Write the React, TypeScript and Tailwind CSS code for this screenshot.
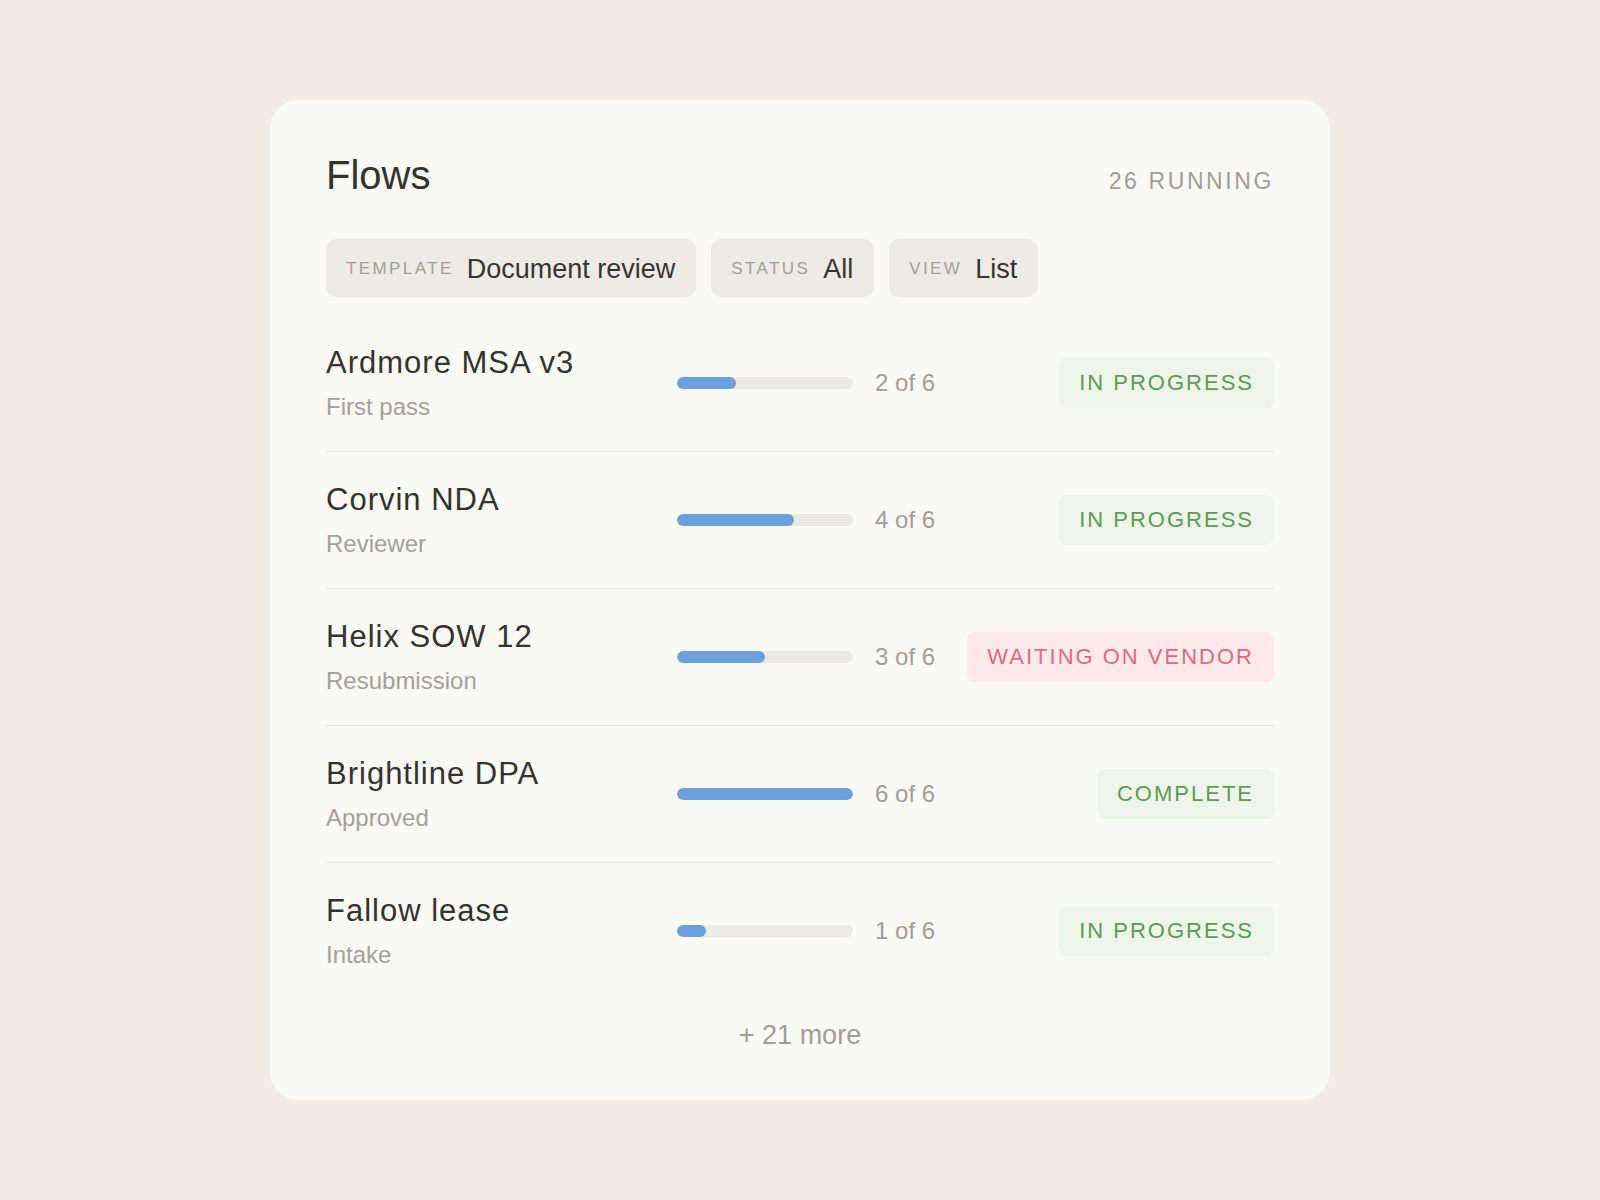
import React from "react";

type Flow = {
  name: string;
  sub: string;
  done: number;
  status: "progress" | "waiting" | "complete";
};

const flows: Flow[] = [
  { name: "Ardmore MSA v3", sub: "First pass", done: 2, status: "progress" },
  { name: "Corvin NDA", sub: "Reviewer", done: 4, status: "progress" },
  { name: "Helix SOW 12", sub: "Resubmission", done: 3, status: "waiting" },
  { name: "Brightline DPA", sub: "Approved", done: 6, status: "complete" },
  { name: "Fallow lease", sub: "Intake", done: 1, status: "progress" },
];

function Badge({ status }: { status: Flow["status"] }) {
  if (status === "waiting") {
    return (
      <span className="flex h-[50px] items-center rounded-lg bg-[#fde9e9] pb-[2px] pl-5 pr-5 text-[22px] tracking-[2px] text-[#e06a7c]">
        WAITING ON VENDOR
      </span>
    );
  }
  return (
    <span className="flex h-[50px] items-center rounded-lg bg-[#ecf5e8] pb-[2px] pl-5 pr-5 text-[22px] tracking-[2px] text-[#5e9a58]">
      {status === "complete" ? "COMPLETE" : "IN PROGRESS"}
    </span>
  );
}

function Chip({ label, value }: { label: string; value: string }) {
  return (
    <div className="flex h-[58px] items-center gap-[13px] rounded-[10px] bg-[#ecebe6] pl-5 pr-[21px] pt-[2px]">
      <span className="text-[17px] tracking-[2.4px] text-[#a3a09a]">{label}</span>
      <span className="text-[27px] text-[#363632]">{value}</span>
    </div>
  );
}

export default function App() {
  return (
    <div
      className="flex min-h-screen w-full items-center justify-center bg-[#f2ede2]"
      style={{ fontFamily: '"Liberation Sans", Arial, sans-serif' }}
    >
      <div className="flex h-[1000px] w-[1060px] flex-col rounded-[28px] bg-[#f9f9f5] px-[56px] pt-[51px]">
        <div className="flex items-baseline justify-between">
          <h1 className="text-[40px] leading-[48px] text-[#34342f]">Flows</h1>
          <span className="text-[23px] tracking-[2.6px] text-[#a09e98]">26 RUNNING</span>
        </div>

        <div className="mt-[40px] flex gap-[15px]">
          <Chip label="TEMPLATE" value="Document review" />
          <Chip label="STATUS" value="All" />
          <Chip label="VIEW" value="List" />
        </div>

        <div className="mt-[18px] flex flex-col">
          {flows.map((f, i) => (
            <div
              key={f.name}
              className={
                "flex items-center py-[30px] " +
                (i < flows.length - 1 ? "border-b border-[#e7e5e0]" : "")
              }
            >
              <div className="flex w-[351px] flex-none flex-col">
                <span className="text-[31px] leading-[36px] tracking-[1px] text-[#33332f]">
                  {f.name}
                </span>
                <span className="mt-[12px] text-[24px] leading-[28px] text-[#a3a19b]">{f.sub}</span>
              </div>
              <div className="h-3 w-[176px] flex-none overflow-hidden rounded-full bg-[#ebeae6]">
                <div
                  className="h-full rounded-full bg-[#6ba0dd]"
                  style={{ width: `${(f.done / 6) * 100}%` }}
                />
              </div>
              <span className="ml-[22px] text-[24px] text-[#a09e98]">{f.done} of 6</span>
              <div className="ml-auto">
                <Badge status={f.status} />
              </div>
            </div>
          ))}
        </div>

        <div className="mt-[18px] text-center text-[27px] leading-[36px] text-[#a09e98]">
          + 21 more
        </div>
      </div>
    </div>
  );
}
